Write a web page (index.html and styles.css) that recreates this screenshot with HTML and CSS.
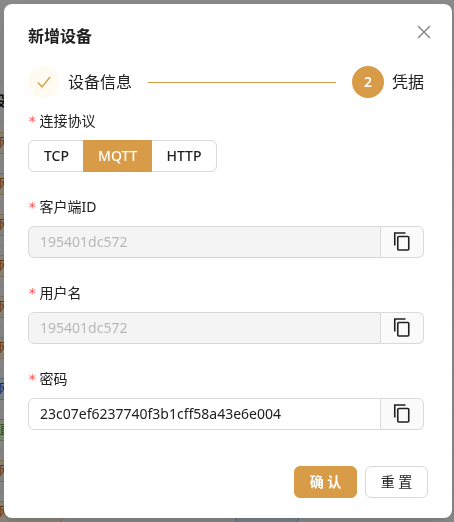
FILE: index.html
```html
<!DOCTYPE html>
<html lang="zh-CN">
<head>
<meta charset="utf-8">
<title>新增设备</title>
<link rel="stylesheet" href="styles.css">
</head>
<body>
<div class="backdrop" aria-hidden="true">
  <div class="row head"><span>设</span></div>
  <div class="row"><span class="tag">网</span></div>
  <div class="row"><span class="tag">网</span></div>
  <div class="row"><span class="tag">网</span></div>
  <div class="row"><span class="tag">网</span></div>
  <div class="row"><span class="tag">网</span></div>
  <div class="row"><span class="tag">网</span></div>
  <div class="row"><span class="tag blue">网</span></div>
  <div class="row"><span class="tag green">直</span></div>
  <div class="row"><span class="tag">网</span></div>
  <div class="row cells"><span class="tag">网</span><span></span><span></span><span class="tag blue"></span></div>
</div>
<div class="mask"></div>
<main class="modal" role="dialog" aria-labelledby="title">
  <header class="modal-head">
    <h1 id="title">新增设备</h1>
    <button class="close" type="button" aria-label="关闭">
      <svg width="16" height="16" viewBox="0 0 16 16"><path d="M2 2l12 12M14 2L2 14"/></svg>
    </button>
  </header>
  <form>
    <ol class="steps">
      <li class="step">
        <span class="dot done"><svg width="16" height="16" viewBox="0 0 16 16"><path d="M2 8.500l4 4.500L14 3"/></svg></span>
        <span>设备信息</span>
      </li>
      <li class="rail"></li>
      <li class="step"><span class="dot current">2</span><span>凭据</span></li>
    </ol>
    <fieldset class="field">
      <legend class="label">连接协议</legend>
      <div class="segments">
        <label><input type="radio" name="protocol">TCP</label>
        <label><input type="radio" name="protocol" checked>MQTT</label>
        <label><input type="radio" name="protocol">HTTP</label>
      </div>
    </fieldset>
    <div class="field">
      <label class="label" for="client">客户端ID</label>
      <div class="group">
        <input id="client" type="text" value="195401dc572" disabled>
        <button type="button" aria-label="复制"><svg width="20" height="20" viewBox="0 0 20 20"><path d="M2.750 13.500V1H13.500"/><rect x="5.750" y="4.500" width="11" height="13.500" rx="1"/></svg></button>
      </div>
    </div>
    <div class="field">
      <label class="label" for="user">用户名</label>
      <div class="group">
        <input id="user" type="text" value="195401dc572" disabled>
        <button type="button" aria-label="复制"><svg width="20" height="20" viewBox="0 0 20 20"><path d="M2.750 13.500V1H13.500"/><rect x="5.750" y="4.500" width="11" height="13.500" rx="1"/></svg></button>
      </div>
    </div>
    <div class="field">
      <label class="label" for="password">密码</label>
      <div class="group">
        <input id="password" type="text" value="23c07ef6237740f3b1cff58a43e6e004">
        <button type="button" aria-label="复制"><svg width="20" height="20" viewBox="0 0 20 20"><path d="M2.750 13.500V1H13.500"/><rect x="5.750" y="4.500" width="11" height="13.500" rx="1"/></svg></button>
      </div>
    </div>
    <footer class="actions">
      <button class="btn primary" type="submit">确 认</button>
      <button class="btn" type="reset">重 置</button>
    </footer>
  </form>
</main>
</body>
</html>
```
FILE: styles.css
```css
* { box-sizing: border-box; }

:root {
  --gold: #d89b48;
  --line: #d9d9d9;
  --ink: #202020;
}

body {
  margin: 0;
  padding: 4px 2px 4px 4px;
  overflow: hidden;
  color: var(--ink);
  font: 14px/22px "Noto Sans", "Noto Sans CJK SC", sans-serif;
}

button, input { font: inherit; color: inherit; }

/* Device table behind the dialog */
.backdrop, .mask { position: fixed; inset: 0; overflow: hidden; }
.backdrop { padding-top: 80px; background: #fff; }
.mask { background: rgba(0, 0, 0, .45); }

.row {
  display: flex;
  align-items: center;
  height: 41px;
  border-top: 1px solid #f0f0f0;
}
.row.head { height: 42px; border-bottom: 1px solid #f0f0f0; font-weight: 700; margin-left: -8px; }
.row.head + .row { border-top: 0; }

.tag {
  height: 22px;
  width: 72px;
  margin-left: -9px;
  padding-left: 7px;
  border: 1px solid #ffd591;
  border-radius: 4px;
  background: #fff7e6;
  color: #d46b08;
  font-size: 12px;
  line-height: 20px;
}
.tag.blue { border-color: #91caff; background: #e6f4ff; color: #0958d9; }
.tag.green { border-color: #b7eb8f; background: #f6ffed; color: #389e0d; }

.cells { display: grid; grid-template-columns: 76px 151px 8px 64px; }
.cells > :nth-child(2) { height: 40px; border: solid #f0f0f0; border-width: 0 1px; }
.cells .blue { width: 64px; margin: 0; }

.modal {
  position: relative;
  padding: 20px 24px;
  border-radius: 8px;
  background: #fff;
  box-shadow: 0 6px 16px rgba(0, 0, 0, .08), 0 3px 6px -4px rgba(0, 0, 0, .12), 0 9px 28px 8px rgba(0, 0, 0, .05);
}

.modal-head { display: flex; justify-content: space-between; height: 42px; }
h1 { margin: 0; font-size: 16px; line-height: 24px; font-weight: 700; }

.close {
  display: flex;
  align-items: center;
  justify-content: center;
  width: 24px;
  height: 16px;
  margin-right: -8px;
  padding: 0;
  border: 0;
  background: none;
}
.close svg { stroke: #858585; stroke-width: 1.4; }
svg { display: block; fill: none; }

.steps {
  display: flex;
  align-items: center;
  gap: 16px;
  margin: 0 4px 12px 0;
  padding: 0;
  list-style: none;
  font-size: 16px;
  line-height: 32px;
}
.step { display: flex; gap: 8px; }
.rail { flex: 1; height: 1px; background: var(--gold); }
.dot {
  display: flex;
  align-items: center;
  justify-content: center;
  width: 32px;
  height: 32px;
  border-radius: 50%;
}
.done { background: #fffbf0; }
.done svg { stroke: var(--gold); stroke-width: 1.3; }
.current { background: var(--gold); color: #fff; font-size: 14px; font-weight: 600; }

.field { margin: 0 4px 24px 0; padding: 0; border: 0; }
.label { display: block; height: 22px; margin-bottom: 8px; padding: 0; font-size: 14px; }
.label::before {
  content: "*";
  margin-right: 3px;
  color: #ff4d4f;
  font: 14px/1 "DejaVu Sans Mono", monospace;
}

.segments { display: flex; width: fit-content; border: 1px solid var(--line); border-radius: 6px; }
.segments label { height: 30px; padding: 0 14px; line-height: 30px; font-weight: 500; }
.segments label:first-child { padding-left: 15px; }
.segments input { position: absolute; opacity: 0; }
.segments label:has(:checked) {
  height: 32px;
  margin: -1px 0;
  padding: 0 15px;
  line-height: 32px;
  background: var(--gold);
  color: #fff;
}

.group { display: flex; height: 32px; }
.group input {
  flex: 1;
  min-width: 0;
  padding: 0 11px;
  border: 1px solid var(--line);
  border-radius: 6px 0 0 6px;
  background: #fff;
}
.group input:disabled { background: #f4f4f4; color: #b8b8b8; }
.group button {
  display: flex;
  align-items: center;
  justify-content: center;
  width: 43px;
  padding: 0;
  border: 1px solid var(--line);
  border-left: 0;
  border-radius: 0 6px 6px 0;
  background: #fafafa;
}
.group svg { stroke: var(--ink); stroke-width: 1.6; }

.actions { display: flex; justify-content: flex-end; gap: 8px; padding-top: 12px; }
.btn {
  min-width: 63px;
  height: 32px;
  padding: 0;
  border: 1px solid var(--line);
  border-radius: 6px;
  background: #fff;
}
.primary { border-color: var(--gold); background: var(--gold); color: #fff; font-weight: 600; }
```
